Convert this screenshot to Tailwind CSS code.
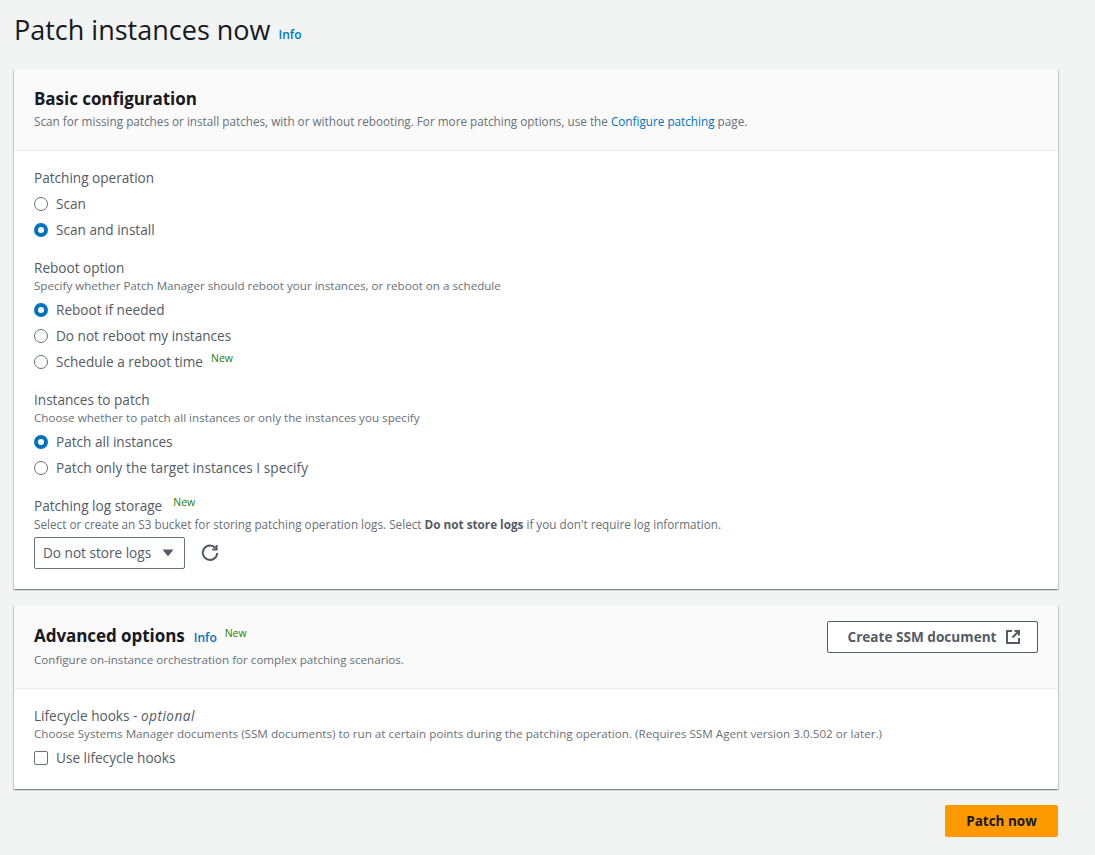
<!DOCTYPE html>
<html lang="en">
<head>
  <meta charset="UTF-8" />
  <title>Patch instances now</title>
  <script src="https://cdn.jsdelivr.net/npm/@tailwindcss/browser@4"></script>
</head>
<body class="bg-[#f2f3f3] text-[#16191f] font-['Open_Sans','Liberation_Sans',sans-serif] text-[13.6px] leading-[22px] h-[855px] overflow-hidden">
  <div class="w-[1044px] ml-[14px]">
    <!-- title -->
    <div class="h-[69px] pt-[12px] flex items-start">
      <h1 class="text-[27px] leading-[36px] font-normal">Patch instances now</h1>
      <a class="ml-[8px] mt-[12px] text-[12px] leading-[22px] font-semibold text-[#0073bb]">Info</a>
    </div>

    <!-- basic configuration -->
    <section class="h-[520px] bg-white shadow-[0_1px_1px_0_rgba(0,28,36,0.3),1px_1px_1px_0_rgba(0,28,36,0.15),-1px_1px_1px_0_rgba(0,28,36,0.15)]">
      <div class="h-[82px] bg-[#fafafa] border-b border-[#eaeded] px-[20px] pt-[18px]">
        <h2 class="text-[17px] leading-[24px] font-bold tracking-[-0.05px]">Basic configuration</h2>
        <p class="text-[11.72px] leading-[16px] mt-[2px] text-[#687078]">Scan for missing patches or install patches, with or without rebooting. For more patching options, use the <a class="text-[#0073bb]">Configure patching</a> page.</p>
      </div>
      <div class="px-[20px] pt-[16px]">
        <div class="text-[#545b64] h-[22px] leading-[22px]">Patching operation</div>
        <div class="mt-[2px] flex flex-col">
          <label class="h-[26px] flex items-center text-[#545b64]"><span class="w-[14px] h-[14px] rounded-full bg-white border border-[#687078] mr-[8px]"></span>Scan</label>
          <label class="h-[26px] flex items-center text-[#545b64]"><span class="w-[14px] h-[14px] rounded-full border-[4px] border-[#0073bb] bg-white mr-[8px]"></span>Scan and install</label>
        </div>

        <div class="mt-[14px] text-[#545b64] h-[22px]">Reboot option</div>
        <p class="text-[11.62px] leading-[16px] mt-[-1px] text-[#687078]">Specify whether Patch Manager should reboot your instances, or reboot on a schedule</p>
        <div class="mt-[3px] flex flex-col">
          <label class="h-[26px] flex items-center text-[#545b64]"><span class="w-[14px] h-[14px] rounded-full border-[4px] border-[#0073bb] bg-white mr-[8px]"></span>Reboot if needed</label>
          <label class="h-[26px] flex items-center text-[#545b64]"><span class="w-[14px] h-[14px] rounded-full bg-white border border-[#687078] mr-[8px]"></span>Do not reboot my instances</label>
          <label class="h-[26px] flex items-center text-[#545b64]"><span class="w-[14px] h-[14px] rounded-full bg-white border border-[#687078] mr-[8px]"></span>Schedule a reboot time<span class="ml-[8px] mt-[-8px] text-[10.5px] leading-[14px] text-[#1d8102]">New</span></label>
        </div>

        <div class="mt-[14px] text-[#545b64] h-[22px]">Instances to patch</div>
        <p class="text-[11.66px] leading-[16px] mt-[-1px] text-[#687078]">Choose whether to patch all instances or only the instances you specify</p>
        <div class="mt-[3px] flex flex-col">
          <label class="h-[26px] flex items-center text-[#545b64]"><span class="w-[14px] h-[14px] rounded-full border-[4px] border-[#0073bb] bg-white mr-[8px]"></span>Patch all instances</label>
          <label class="h-[26px] flex items-center text-[#545b64] tracking-[0.07px]"><span class="w-[14px] h-[14px] rounded-full bg-white border border-[#687078] mr-[8px]"></span>Patch only the target instances I specify</label>
        </div>

        <div class="mt-[14px] text-[#545b64] h-[22px] flex">Patching log storage<span class="ml-[11px] mt-[0px] text-[10.5px] leading-[14px] text-[#1d8102]">New</span></div>
        <p class="text-[11.72px] leading-[16px] mt-[-1px] text-[#687078]">Select or create an S3 bucket for storing patching operation logs. Select <b class="font-bold text-[#545b64]">Do not store logs</b> if you don't require log information.</p>
        <div class="mt-[5px] flex items-center">
          <div class="w-[151px] h-[32px] bg-white border border-[#687078] rounded-[2px] pl-[8px] pr-[10px] flex items-center justify-between text-[#545b64]">
            <span>Do not store logs</span>
            <svg width="12" height="8" viewBox="0 0 12 8"><path d="M0.5 0.5h11L6 7.5z" fill="#545b64"/></svg>
          </div>
          <svg class="ml-[16px]" width="18" height="18" viewBox="0 0 18 18" fill="none" stroke="#545b64" stroke-width="2"><path d="M14.6 4.2A7.2 7.2 0 1 0 16.2 9"/><path d="M15.6 1v4.4h-4.4" stroke-width="2"/></svg>
        </div>
      </div>
    </section>

    <!-- advanced options -->
    <section class="mt-[16px] h-[184px] bg-white shadow-[0_1px_1px_0_rgba(0,28,36,0.3),1px_1px_1px_0_rgba(0,28,36,0.15),-1px_1px_1px_0_rgba(0,28,36,0.15)]">
      <div class="h-[84px] bg-[#fafafa] border-b border-[#eaeded] pl-[20px] pr-[20px] pt-[16px] flex justify-between">
        <div>
          <div class="flex items-start h-[30px]">
            <h2 class="text-[17px] leading-[30px] font-bold tracking-[-0.05px]">Advanced options</h2>
            <a class="ml-[9px] mt-[6px] text-[12px] leading-[22px] font-semibold text-[#0073bb]">Info</a>
            <span class="ml-[8px] mt-[5px] text-[10.5px] leading-[14px] text-[#1d8102]">New</span>
          </div>
          <p class="text-[11.62px] leading-[16px] mt-[1px] text-[#687078]">Configure on-instance orchestration for complex patching scenarios.</p>
        </div>
        <button class="w-[211px] h-[32px] pl-[3px] bg-white border border-[#545b64] rounded-[2px] flex items-center justify-center font-bold text-[#545b64] text-[13.6px]">
          Create SSM document
          <svg class="ml-[8px]" width="16" height="16" viewBox="0 0 16 16" fill="none" stroke="#545b64" stroke-width="2"><path d="M7 2H2v12h12V9"/><path d="M9.5 2H14v4.5"/><path d="M14 2L7.5 8.5"/></svg>
        </button>
      </div>
      <div class="px-[20px] pt-[16px]">
        <div class="text-[#545b64] h-[22px]">Lifecycle hooks - <i class="italic tracking-[0.5px]">optional</i></div>
        <p class="text-[11.68px] leading-[16px] mt-[-1px] text-[#687078]">Choose Systems Manager documents (SSM documents) to run at certain points during the patching operation. (Requires SSM Agent version 3.0.502 or later.)</p>
        <label class="mt-[3px] h-[26px] flex items-center text-[#545b64]"><span class="w-[14px] h-[14px] rounded-[2px] bg-white border border-[#687078] mr-[8px]"></span>Use lifecycle hooks</label>
      </div>
    </section>

    <div class="mt-[16px] flex justify-end">
      <button class="w-[113px] h-[32px] bg-[#ff9900] rounded-[2px] font-bold text-[13.5px] text-[#16191f]">Patch now</button>
    </div>
  </div>
</body>
</html>
